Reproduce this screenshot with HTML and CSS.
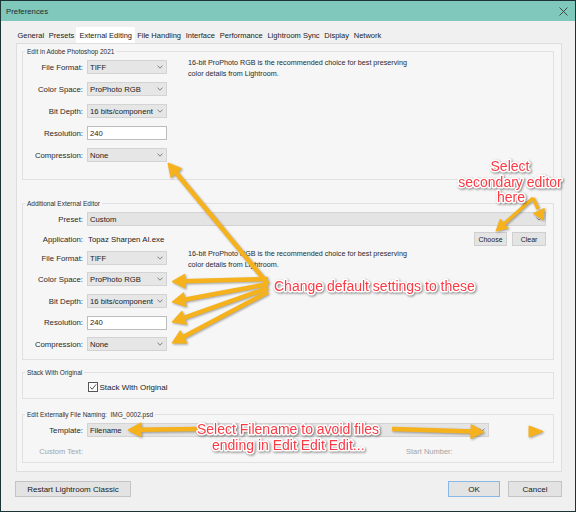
FILE: index.html
```html
<!DOCTYPE html>
<html>
<head>
<meta charset="utf-8">
<title>Preferences</title>
<link rel="stylesheet" href="styles.css">
</head>
<body>
<div class="window">
  <div class="titlebar">
    <span class="title">Preferences</span>
    <svg class="close" viewBox="0 0 9 9" width="9" height="9"><path d="M0.5 0.5 L8.5 8.5 M8.5 0.5 L0.5 8.5" stroke="#3a3a3a" stroke-width="0.9" fill="none"/></svg>
  </div>
  <div class="tabs">
    <span class="tab">General</span>
    <span class="tab">Presets</span>
    <span class="tab active">External Editing</span>
    <span class="tab">File Handling</span>
    <span class="tab">Interface</span>
    <span class="tab">Performance</span>
    <span class="tab">Lightroom Sync</span>
    <span class="tab">Display</span>
    <span class="tab">Network</span>
  </div>
  <div class="panel">
    <fieldset class="group g1">
      <legend>Edit in Adobe Photoshop 2021</legend>
      <div class="cols">
        <div class="form">
          <div class="row"><span class="lbl">File Format:</span><span class="select">TIFF<svg class="chev" viewBox="0 0 6 4"><path d="M0.5 0.6 L3 3.2 L5.5 0.6"/></svg></span></div>
          <div class="row"><span class="lbl">Color Space:</span><span class="select">ProPhoto RGB<svg class="chev" viewBox="0 0 6 4"><path d="M0.5 0.6 L3 3.2 L5.5 0.6"/></svg></span></div>
          <div class="row"><span class="lbl">Bit Depth:</span><span class="select">16 bits/component<svg class="chev" viewBox="0 0 6 4"><path d="M0.5 0.6 L3 3.2 L5.5 0.6"/></svg></span></div>
          <div class="row"><span class="lbl">Resolution:</span><span class="input">240</span></div>
          <div class="row"><span class="lbl">Compression:</span><span class="select">None<svg class="chev" viewBox="0 0 6 4"><path d="M0.5 0.6 L3 3.2 L5.5 0.6"/></svg></span></div>
        </div>
        <div class="desc d1">16-bit ProPhoto RGB is the recommended choice for best preserving<br>color details from Lightroom.</div>
      </div>
    </fieldset>

    <fieldset class="group g2">
      <legend>Additional External Editor</legend>
      <div class="row"><span class="lbl">Preset:</span><span class="field wide">Custom<svg class="chev" viewBox="0 0 6 4"><path d="M0.5 0.6 L3 3.2 L5.5 0.6"/></svg></span></div>
      <div class="row h18"><span class="lbl">Application:</span><span class="app">Topaz Sharpen AI.exe</span>
        <span class="btns"><span class="sbtn choose">Choose</span><span class="sbtn clear">Clear</span></span>
      </div>
      <div class="cols">
        <div class="form">
          <div class="row h20"><span class="lbl">File Format:</span><span class="select">TIFF<svg class="chev" viewBox="0 0 6 4"><path d="M0.5 0.6 L3 3.2 L5.5 0.6"/></svg></span></div>
          <div class="row"><span class="lbl">Color Space:</span><span class="select">ProPhoto RGB<svg class="chev" viewBox="0 0 6 4"><path d="M0.5 0.6 L3 3.2 L5.5 0.6"/></svg></span></div>
          <div class="row"><span class="lbl">Bit Depth:</span><span class="select">16 bits/component<svg class="chev" viewBox="0 0 6 4"><path d="M0.5 0.6 L3 3.2 L5.5 0.6"/></svg></span></div>
          <div class="row h21"><span class="lbl">Resolution:</span><span class="input">240</span></div>
          <div class="row"><span class="lbl">Compression:</span><span class="select">None<svg class="chev" viewBox="0 0 6 4"><path d="M0.5 0.6 L3 3.2 L5.5 0.6"/></svg></span></div>
        </div>
        <div class="desc d2">16-bit ProPhoto RGB is the recommended choice for best preserving<br>color details from Lightroom.</div>
      </div>
    </fieldset>

    <fieldset class="group g3">
      <legend>Stack With Original</legend>
      <div class="row h20 checkrow">
        <span class="checkbox"><svg viewBox="0 0 10 10" width="8" height="8"><path d="M1.5 5.2 L4 7.8 L8.8 1.8" fill="none" stroke="#222" stroke-width="1"/></svg></span>
        <span class="checklbl">Stack With Original</span>
      </div>
    </fieldset>

    <fieldset class="group g4">
      <legend>Edit Externally File Naming:&nbsp; IMG_0002.psd</legend>
      <div class="row"><span class="lbl">Template:</span><span class="field tmpl">Filename<svg class="chev" viewBox="0 0 6 4"><path d="M0.5 0.6 L3 3.2 L5.5 0.6"/></svg></span></div>
      <div class="row h21"><span class="lbl dim">Custom Text:</span><span class="dim startnum">Start Number:</span></div>
    </fieldset>
  </div>

  <div class="footer">
    <span class="btn restart">Restart Lightroom Classic</span>
    <span class="btn ok">OK</span>
    <span class="btn cancel">Cancel</span>
  </div>

  <svg class="annot" viewBox="0 0 576 512" width="576" height="512">
    <g class="arrows">
      <line x1="268" y1="284" x2="175" y2="171.5"/>
      <polygon points="168,163 181.7,168.6 170.9,177.5"/>
      <line x1="268" y1="279" x2="183" y2="281.3"/>
      <polygon points="172,281.5 184.8,274.2 185.2,288.2"/>
      <line x1="268" y1="284" x2="182.8" y2="300"/>
      <polygon points="172,302 183.5,292.7 186.1,306.5"/>
      <line x1="268" y1="288" x2="182.4" y2="318.4"/>
      <polygon points="172,322 181.9,311.1 186.6,324.3"/>
      <line x1="268" y1="292" x2="181.7" y2="337.8"/>
      <polygon points="172,343 180.2,330.7 186.8,343.1"/>
      <line class="thin" x1="533" y1="198" x2="502.7" y2="225"/>
      <polygon points="496,231 500.2,219.2 508.2,228.2"/>
      <line class="thin" x1="533" y1="198" x2="538.1" y2="209.1"/>
      <polygon points="543,220 533.4,213.4 544.3,208.4"/>
      <line x1="197" y1="429" x2="139" y2="429.8"/>
      <polygon points="128,430 140.9,422.8 141.1,436.8"/>
      <line x1="392" y1="429" x2="473" y2="431.6"/>
      <polygon points="484,432 470.8,438.6 471.2,424.6"/>
      <polygon points="529,426 543,431.5 529,437"/>
    </g>
    <g class="notes">
      <text x="510" y="171" text-anchor="middle">Select</text>
      <text x="510" y="187" text-anchor="middle">secondary editor</text>
      <text x="511" y="202" text-anchor="middle">here</text>
      <text x="274" y="291">Change default settings to these</text>
      <text x="197" y="434">Select Filename to avoid files</text>
      <text x="212" y="450">ending in Edit Edit Edit...</text>
    </g>
  </svg>
</div>
</body>
</html>
```

FILE: styles.css
```css
html, body {
  margin: 0;
  padding: 0;
  background: #f0f0f0;
}

body {
  font-family: "Liberation Sans", Arial, sans-serif;
  color: #1c1c1c;
}

.window {
  position: relative;
  width: 576px;
  height: 512px;
  box-sizing: border-box;
  border: 1px solid #1d3434;
  background: #f0f0f0;
  display: flex;
  flex-direction: column;
  overflow: hidden;
}

.titlebar {
  height: 20px;
  flex: none;
  background: #80c8bb;
  display: flex;
  align-items: center;
  justify-content: space-between;
  padding: 0 7px 0 5px;
  font-size: 7.8px;
  color: #1f2a2a;
}

.close {
  display: block;
}

.tabs {
  display: flex;
  height: 16px;
  flex: none;
  margin: 6px 0 0 14px;
  font-size: 7.5px;
  color: #222;
}

.tab {
  display: flex;
  align-items: center;
  padding: 0 2.4px;
}

.tab.active {
  background: #ffffff;
  padding: 0 3.2px;
  margin: 0 -0.4px;
}

.panel {
  flex: none;
  height: 429px;
  box-sizing: border-box;
  margin: 0 13px 0 15px;
  border: 1px solid #dedede;
  background: #f6f6f6;
  padding: 3px 7px 0 5px;
}

.group {
  margin: 0;
  padding: 0 0 4px 0;
  border: 1px solid #e1e1e1;
  min-width: 0;
}

.group legend {
  font-size: 6.5px;
  line-height: 9px;
  padding: 0 2px;
  margin-left: 2px;
  color: #2e2e2e;
}

.g1 { padding-bottom: 13px; }
.g2 { margin-top: 19px; }
.g3 { margin-top: 8px; padding-bottom: 1px; }
.g4 { margin-top: 11px; padding-bottom: 0; }

.cols {
  display: flex;
  align-items: flex-start;
}

.form {
  display: flex;
  flex-direction: column;
}

.row {
  display: flex;
  align-items: center;
  height: 22px;
}

.row.h18 { height: 18px; }
.row.h20 { height: 20px; }
.row.h21 { height: 21px; }

.lbl {
  width: 60px;
  flex: none;
  text-align: right;
  margin-right: 4px;
  font-size: 7.8px;
  color: #2a2a2a;
}

.select, .field {
  width: 80px;
  height: 14px;
  box-sizing: border-box;
  background: #e6e6e6;
  border: 1px solid #d3d3d3;
  display: flex;
  align-items: center;
  justify-content: space-between;
  padding: 0 3px 0 2px;
  font-size: 7.7px;
  color: #1a1a1a;
  white-space: nowrap;
}

.field.wide { width: 459px; background: #e4e4e4; }
.field.tmpl { width: 402px; background: #e4e4e4; }

.chev {
  width: 6px;
  height: 4px;
  flex: none;
}

.chev path {
  fill: none;
  stroke: #666;
  stroke-width: 0.8;
}

.input {
  width: 80px;
  height: 14px;
  box-sizing: border-box;
  background: #ffffff;
  border: 1px solid #bdbdbd;
  display: flex;
  align-items: center;
  padding: 0 2px;
  font-size: 7.7px;
}

.desc {
  margin-left: 21px;
  font-size: 7.2px;
  line-height: 10.5px;
  color: #2a2a2a;
  white-space: nowrap;
}

.d1 { margin-top: 2px; }
.d2 { margin-top: 1px; }

.app {
  font-size: 7.8px;
  margin-left: 1px;
}

.btns {
  margin-left: auto;
  margin-right: 7px;
  display: flex;
  gap: 5px;
}

.sbtn {
  height: 14px;
  box-sizing: border-box;
  border: 1px solid #cfcfcf;
  background: #e4e4e4;
  font-size: 7px;
  display: flex;
  align-items: center;
  justify-content: center;
}

.sbtn.choose { width: 33px; }
.sbtn.clear { width: 34px; }

.checkrow {
  padding-left: 65px;
}

.checkbox {
  width: 10px;
  height: 10px;
  box-sizing: border-box;
  border: 1px solid #555;
  background: #fff;
  display: flex;
  align-items: center;
  justify-content: center;
}

.checklbl {
  margin-left: 1.5px;
  font-size: 8px;
}

.dim {
  color: #a4a4a4;
  font-size: 7.5px;
}

.startnum {
  margin-left: 319px;
}

.footer {
  display: flex;
  margin-top: 9px;
  padding: 0 13px 0 14px;
}

.btn {
  height: 16px;
  box-sizing: border-box;
  border: 1px solid #c4c4c4;
  background: #e3e3e3;
  font-size: 8px;
  display: flex;
  align-items: center;
  justify-content: center;
  color: #1a1a1a;
}

.btn.restart { width: 116px; }
.btn.ok { width: 52px; margin-left: auto; border-color: #8ab8e6; }
.btn.cancel { width: 54px; margin-left: 8px; }

.annot {
  position: absolute;
  left: -1px;
  top: -1px;
  pointer-events: none;
}

.arrows {
  filter: drop-shadow(1px 1px 1px rgba(0, 0, 0, 0.35));
}

.arrows line {
  stroke: #f6b21c;
  stroke-width: 4.5;
}

.arrows line.thin {
  stroke-width: 3.5;
}

.arrows polygon {
  fill: #f6b21c;
  stroke: #f6b21c;
  stroke-width: 1;
  stroke-linejoin: round;
}

.notes {
  filter: drop-shadow(1px 1px 1px rgba(0, 0, 0, 0.45));
}

.notes text {
  font-family: "Liberation Sans", Arial, sans-serif;
  font-size: 14px;
  fill: #fb3a44;
  stroke: #ffffff;
  stroke-width: 3px;
  stroke-linejoin: round;
  paint-order: stroke;
}
```
